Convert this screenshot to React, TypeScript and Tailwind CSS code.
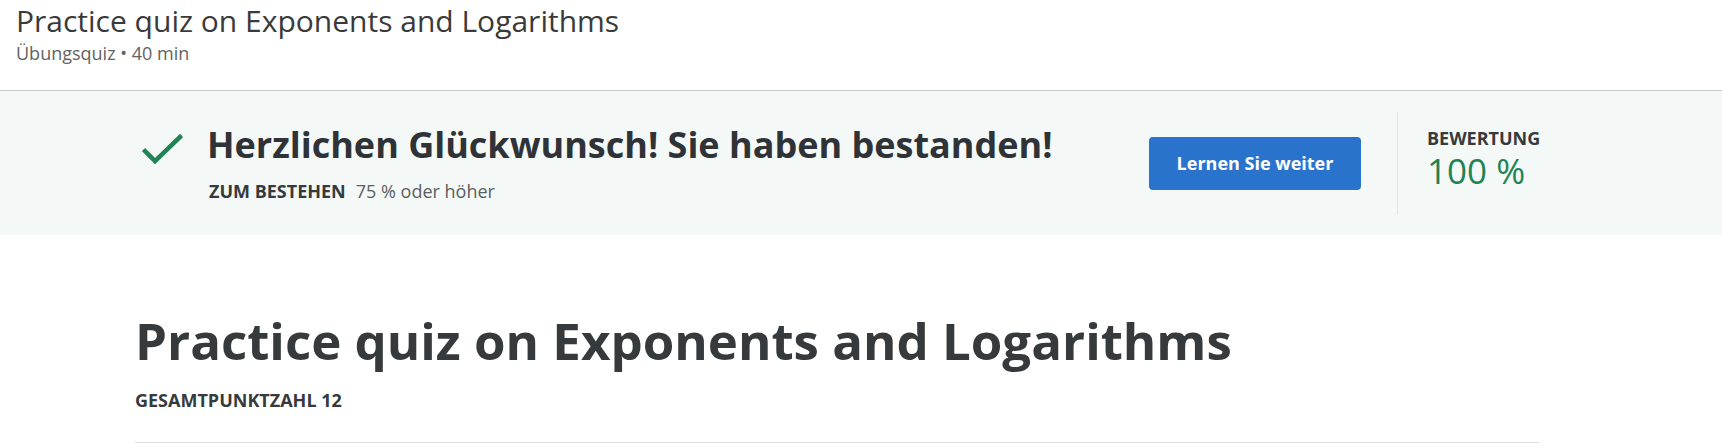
export default function App() {
  return (
    <div className="min-h-screen w-full bg-white text-[#373a3c]" style={{ fontFamily: '"Open Sans", "Liberation Sans", sans-serif' }}>
      {/* Top header */}
      <header className="h-[91px] border-b border-[#c8c8c8] pl-4 pt-[2px]">
        <h2 className="text-[30px] font-normal leading-[38px] text-[#3a3a3a]">Practice quiz on Exponents and Logarithms</h2>
        <p className="mt-px text-[18px] leading-[24px] text-[#636363]">Übungsquiz • 40 min</p>
      </header>

      {/* Passed banner */}
      <section className="flex h-[144px] items-center bg-[#f4f8f7]">
        <div className="ml-[142px] flex w-[1397px] items-center">
          <div className="flex flex-1 items-start">
            <svg className="mt-[11px] shrink-0" width="41" height="31" viewBox="0 0 41 31" fill="none">
              <polyline points="1.5,15.5 13,27 39.5,1.5" stroke="#1f8354" strokeWidth="4.5" />
            </svg>
            <div className="ml-[24px]">
              <h3 className="text-[36px] font-bold leading-[44px] text-[#2f3337]">Herzlichen Glückwunsch! Sie haben bestanden!</h3>
              <p className="mt-[12px] pl-[2px] text-[18px] leading-[24px]">
                <span className="font-bold text-[#373a3c]">ZUM BESTEHEN</span>
                <span className="ml-[10px] text-[#5b5e60]">75 % oder höher</span>
              </p>
            </div>
          </div>
          <button className="h-[53px] w-[212px] rounded-[4px] bg-[#2a73cc] text-[18px] font-bold text-white">Lernen Sie weiter</button>
          <div className="ml-[36px] h-[103px] w-px bg-[#dde3e1]" />
          <div className="mb-[12px] w-[112px] pl-[29px] box-content">
            <div className="text-[18px] font-bold leading-[22px] text-[#373a3c]">BEWERTUNG</div>
            <div className="mt-[4px] text-[35px] leading-none text-[#1f8354]">100 %</div>
          </div>
        </div>
      </section>

      {/* Quiz body */}
      <main className="ml-[135px] w-[1404px] pt-[73px]">
        <h1 className="text-[51px] font-bold leading-[64px] text-[#373a3c]">Practice quiz on Exponents and Logarithms</h1>
        <p className="mt-[16px] text-[18px] font-bold leading-[24px] text-[#373a3c]">GESAMTPUNKTZAHL 12</p>
        <div className="mt-[30px] h-px bg-[#dedede]" />
      </main>
    </div>
  );
}
